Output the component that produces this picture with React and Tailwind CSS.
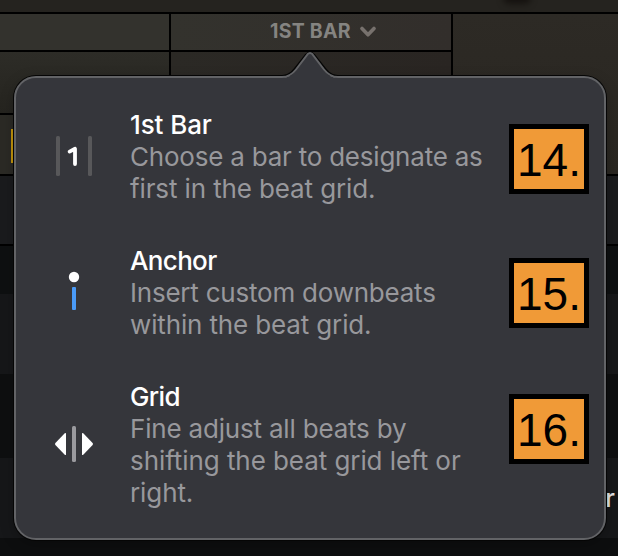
import React from 'react';

const BarIcon = () => (
  <svg className="w-10 h-11" viewBox="0 0 40 44" fill="none">
    <rect x="2" y="2" width="4" height="40" rx="1.5" fill="#58585a" />
    <rect x="34" y="2" width="4" height="40" rx="1.5" fill="#58585a" />
    <path d="M15.600 17.600L21 14.800V30" stroke="#fff" strokeWidth="3.800" strokeLinecap="round" strokeLinejoin="round" />
  </svg>
);

const AnchorIcon = () => (
  <svg className="w-10 h-11" viewBox="0 0 40 44">
    <circle cx="20" cy="7" r="5.2" fill="#fff" />
    <rect x="18" y="17" width="4" height="23" rx="1" fill="#4a9bf8" />
  </svg>
);

const GridIcon = () => (
  <svg className="w-10 h-11" viewBox="0 0 40 44">
    <path d="M11 11Q12 10.600 12 11.800V32.200Q12 33.400 11 33L1.400 23Q.6 22 1.400 21Z" fill="#fff" />
    <path d="M29 11Q28 10.600 28 11.800V32.200Q28 33.400 29 33L38.600 23Q39.400 22 38.600 21Z" fill="#fff" />
    <rect x="18" y="4" width="4" height="36" rx="1.5" fill="#9a9a9e" />
  </svg>
);

const items = [
  {
    title: '1st Bar',
    titleTracking: 'tracking-[-0.1px]',
    lines: [
      { text: 'Choose a bar to designate as', tracking: 'tracking-[-0.22px]' },
      { text: 'first in the beat grid.', tracking: 'tracking-[-0.12px]' },
    ],
    icon: <BarIcon />,
    iconPad: 'pt-[25px]',
    badge: '14.',
    badgePad: 'pt-[15px]',
  },
  {
    title: 'Anchor',
    titleTracking: 'tracking-[-0.65px]',
    lines: [
      { text: 'Insert custom downbeats', tracking: 'tracking-[-0.22px]' },
      { text: 'within the beat grid.', tracking: 'tracking-[-0.14px]' },
    ],
    icon: <AnchorIcon />,
    iconPad: 'pt-[25px]',
    badge: '15.',
    badgePad: 'pt-[13px]',
  },
  {
    title: 'Grid',
    titleTracking: 'tracking-[-0.6px]',
    lines: [
      { text: 'Fine adjust all beats by', tracking: 'tracking-[-0.19px]' },
      { text: 'shifting the beat grid left or', tracking: 'tracking-[-0.07px]' },
      { text: 'right.', tracking: 'tracking-[-0.1px]' },
    ],
    icon: <GridIcon />,
    iconPad: 'pt-[41px]',
    badge: '16.',
    badgePad: 'pt-[13px]',
  },
];

const Row = ({ item }) => (
  <div className="flex items-start">
    <div className={`w-[76px] shrink-0 ${item.iconPad}`}>{item.icon}</div>
    <div className="w-[379px] shrink-0 text-[26px] leading-8 whitespace-nowrap">
      <h3 className={`font-medium text-white ${item.titleTracking}`}>{item.title}</h3>
      {item.lines.map((line) => (
        <p key={line.text} className={`text-[#98989c] ${line.tracking}`}>{line.text}</p>
      ))}
    </div>
    <div className={item.badgePad}>
      <div className="w-20 h-[70px] pt-0.5 border-5 border-black bg-[#f09a37] flex items-center justify-center font-['Liberation_Sans',sans-serif] text-[46px] leading-none text-black">
        {item.badge}
      </div>
    </div>
  </div>
);

const Backdrop = () => (
  <div className="h-full flex flex-col bg-[#0d0e0f]">
    <div className="h-3 bg-[#25231f] shrink-0 flex justify-end overflow-hidden">
      <div className="w-7 h-3 mr-[87px] -mt-2 rounded-full bg-[#15120f] blur-[3px]" />
    </div>
    <div className="h-[164px] shrink-0 flex gap-0.5 border-y-2 border-black bg-black">
      <div className="w-[169px] flex flex-col gap-0.5">
        <div className="h-9 bg-[#33322d]" />
        <div className="h-[61px] bg-linear-to-b from-[#2d2c27] to-[#25241f]" />
        <div className="flex-1 flex justify-end bg-[#2b2a25]">
          <div className="w-[158px] h-[34px] mt-3.5 bg-[#c4960c]" />
        </div>
      </div>
      <div className="w-[280px] flex flex-col gap-0.5">
        <div className="h-9 pl-[99px] flex items-center bg-linear-to-r from-[#33322d] to-[#322e2b]">
          <span className="w-[83px] text-[19.5px] font-bold leading-none tracking-[0.25px] whitespace-nowrap text-[#858481]">1ST BAR</span>
          <svg className="ml-1.5 w-[18px] h-3" viewBox="0 0 18 12" fill="none">
            <path d="M3 2.500L9 8.800L15 2.500" stroke="#77716d" strokeWidth="3.600" strokeLinecap="round" strokeLinejoin="round" />
          </svg>
        </div>
        <div className="flex-1 bg-linear-to-r from-[#2b2925] to-[#292522]" />
      </div>
      <div className="flex-1 bg-linear-to-b from-[#2d2a25] to-[#292621]" />
    </div>
    <div className="h-[70px] shrink-0 border-b-2 border-black bg-[#1a1b1d]" />
    <div className="h-12 shrink-0 bg-[#0e1011]" />
    <div className="h-20 shrink-0 bg-[#161719]" />
    <div className="h-[84px] shrink-0 bg-[#0e0f10]" />
    <div className="h-20 shrink-0 bg-[#161719] flex items-center justify-end">
      <span className="pr-[3px] text-[25px] leading-none font-medium text-[#e4e4e4]">r</span>
    </div>
  </div>
);

export default function App() {
  return (
    <div className="relative w-[618px] h-[556px] overflow-hidden font-[Inter,sans-serif]">
      <Backdrop />

      {/* Popover */}
      <div className="absolute left-[14px] top-[76px] w-[592px] h-[464px] rounded-[22px] border-2 border-[#626366] bg-[#35363b] shadow-[0_0_0_1px_#050505,0_4px_14px_rgba(0,0,0,0.25)]">
        <svg className="absolute left-[262px] -top-[27px] w-[64px] h-[30px]" viewBox="0 0 64 30">
          <path d="M0 25.500H2C9 25.500 13 23 16.500 18.500L28 4Q32 -.6 36 4L47.500 18.500C51 23 55 25.500 62 25.500H64" fill="none" stroke="#050505" strokeWidth="2.500" />
          <path d="M0 27H4C10 27 14.500 24 18 19.500L29.500 4.300Q32 1.300 34.500 4.300L46 19.500C49.500 24 54 27 60 27H64V30H0Z" fill="#35363b" />
          <path d="M0 26H4C10 26 14.500 23 18 18.500L29.500 3.300Q32 .6 34.500 3.300L46 18.500C49.500 23 54 26 60 26H64" fill="none" stroke="#626366" strokeWidth="2" />
        </svg>
        <div className="pl-[38px] pt-[31px] flex flex-col gap-10">
          {items.map((item) => (
            <Row key={item.title} item={item} />
          ))}
        </div>
      </div>
    </div>
  );
}
